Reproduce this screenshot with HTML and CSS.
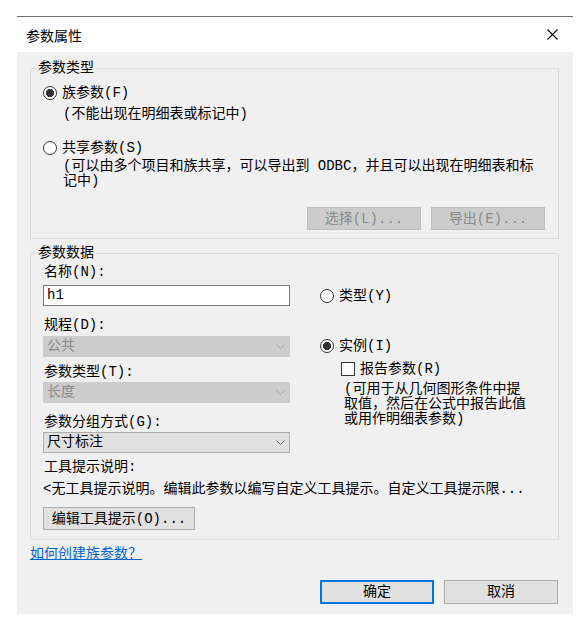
FILE: index.html
```html
<!DOCTYPE html>
<html lang="zh-CN">
<head>
    <meta charset="UTF-8">
    <meta name="viewport" content="width=device-width, initial-scale=1.0">
    <title>参数属性</title>
    <link rel="stylesheet" href="styles.css">
</head>
<body>

    <div class="dialog">
        <div class="titlebar">
            <span class="title">参数属性</span>
            <svg class="close" width="11" height="11" viewBox="0 0 11 11">
                <path d="M0.5 0.5 L10.5 10.5 M10.5 0.5 L0.5 10.5" stroke="#000" stroke-width="1.1" fill="none"/>
            </svg>
        </div>

        <div class="content">

            <fieldset class="group group-type">
                <legend>参数类型</legend>
                <div class="group-body">
                    <div class="opt"><span class="radio checked"></span>族参数(F)</div>
                    <p class="note note-family">(不能出现在明细表或标记中)</p>
                    <div class="opt opt-shared"><span class="radio"></span>共享参数(S)</div>
                    <p class="note note-shared">(可以由多个项目和族共享，可以导出到 ODBC，并且可以出现在明细表和标<br>记中)</p>
                    <div class="group-actions">
                        <button class="btn" disabled>选择(L)...</button>
                        <button class="btn" disabled>导出(E)...</button>
                    </div>
                </div>
            </fieldset>

            <fieldset class="group group-data">
                <legend>参数数据</legend>
                <div class="group-body">
                    <div class="data-cols">
                        <div class="col-left">
                            <p class="field-label">名称(N):</p>
                            <div class="textbox">h1</div>

                            <p class="field-label lbl-discipline">规程(D):</p>
                            <div class="select disabled">
                                <span>公共</span>
                                <svg width="9" height="5" viewBox="0 0 9 5"><path d="M0.5 0.5 L4.5 4.5 L8.5 0.5" stroke="currentColor" fill="none"/></svg>
                            </div>

                            <p class="field-label lbl-ptype">参数类型(T):</p>
                            <div class="select disabled">
                                <span>长度</span>
                                <svg width="9" height="5" viewBox="0 0 9 5"><path d="M0.5 0.5 L4.5 4.5 L8.5 0.5" stroke="currentColor" fill="none"/></svg>
                            </div>

                            <p class="field-label lbl-group">参数分组方式(G):</p>
                            <div class="select">
                                <span>尺寸标注</span>
                                <svg width="9" height="5" viewBox="0 0 9 5"><path d="M0.5 0.5 L4.5 4.5 L8.5 0.5" stroke="currentColor" fill="none"/></svg>
                            </div>
                        </div>

                        <div class="col-right">
                            <div class="opt opt-typ"><span class="radio"></span>类型(Y)</div>
                            <div class="opt opt-inst"><span class="radio checked"></span>实例(I)</div>
                            <div class="opt check-row"><span class="checkbox"></span>报告参数(R)</div>
                            <p class="desc">(可用于从几何图形条件中提<br>取值，然后在公式中报告此值<br>或用作明细表参数)</p>
                        </div>
                    </div>

                    <p class="field-label lbl-tip">工具提示说明:</p>
                    <p class="tip-text">&lt;无工具提示说明。编辑此参数以编写自定义工具提示。自定义工具提示限...</p>
                    <button class="btn btn-tip">编辑工具提示(O)...</button>
                </div>
            </fieldset>

            <a class="help-link" href="#">如何创建族参数？</a>

            <div class="dialog-actions">
                <button class="btn btn-big btn-ok">确定</button>
                <button class="btn btn-big">取消</button>
            </div>

        </div>
    </div>

</body>
</html>
```

FILE: styles.css
```css
body {
    margin: 0;
    padding: 0;
    background: #fff;
    color: #000;
    font-family: "Liberation Mono", "Noto Sans CJK SC", monospace;
    font-size: 14px;
}

p {
    margin: 0;
}

.dialog {
    margin: 16px 0 0 17px;
    width: 556px;
    border-top: 1px solid #6f6f64;
}

.titlebar {
    height: 35px;
    display: flex;
    align-items: center;
    justify-content: space-between;
    padding: 0 15px 0 9px;
}

.title {
    font-family: "Noto Sans CJK SC", sans-serif;
    line-height: 16px;
}

.content {
    box-sizing: border-box;
    height: 562px;
    background: #f0f0f0;
    padding: 8px 14px 0 13px;
}

/* group boxes */
.group {
    margin: 0;
    padding: 0;
    min-width: 0;
    border: 1px solid #dcdcdc;
}

.group legend {
    margin-left: 5px;
    padding: 0 2px;
    line-height: 16px;
}

.group-type .group-body {
    padding: 8px 13px 8px 12px;
}

.group-data {
    margin-top: 6px;
}

.group-data .group-body {
    padding: 3px 13px 9px 12px;
}

/* radios & checkbox */
.opt {
    display: flex;
    align-items: center;
    gap: 5px;
    height: 18px;
    line-height: 18px;
}

.radio,
.checkbox {
    flex: none;
    box-sizing: border-box;
    width: 14px;
    height: 14px;
    border: 1px solid #333;
    background: #fff;
}

.radio {
    border-radius: 50%;
}

.radio.checked {
    background: radial-gradient(circle, #333 0 3.8px, #fff 4.4px);
}

.note {
    margin: 5px 0 0 20px;
    line-height: 15px;
}

.opt-shared {
    margin-top: 17px;
}

.note-shared {
    margin-top: 2px;
}

.group-actions {
    display: flex;
    justify-content: flex-end;
    gap: 10px;
    margin-top: 18px;
}

/* buttons */
.btn {
    box-sizing: border-box;
    width: 114px;
    height: 23px;
    padding: 0;
    border: 1px solid #adadad;
    background: #e1e1e1;
    color: #000;
    font: inherit;
    line-height: 20px;
}

.btn:disabled {
    background: #cccccc;
    border-color: #bfbfbf;
    color: #8a8a8a;
}

/* parameter data */
.data-cols {
    display: flex;
    gap: 30px;
}

.col-left {
    width: 247px;
}

.field-label {
    line-height: 16px;
    margin-left: 1px;
}

.textbox {
    box-sizing: border-box;
    margin-top: 5px;
    height: 21px;
    padding-left: 3px;
    border: 1px solid #7a7a7a;
    background: #fff;
    line-height: 19px;
}

.lbl-discipline {
    margin-top: 11px;
}

.lbl-ptype {
    margin-top: 7px;
}

.lbl-group {
    margin-top: 11px;
}

.select {
    box-sizing: border-box;
    display: flex;
    align-items: center;
    justify-content: space-between;
    height: 21px;
    margin-top: 2px;
    padding: 0 4px 0 3px;
    border: 1px solid #adadad;
    background: #e1e1e1;
    color: #606060;
    line-height: 19px;
}

.select span {
    color: #000;
}

.select.disabled {
    background: #cccccc;
    border-color: #cccccc;
    color: #a8a8a8;
}

.select.disabled span {
    color: #8a8a8a;
}

.lbl-discipline + .select {
    margin-top: 3px;
}

.opt-typ {
    margin-top: 23px;
}

.opt-inst {
    margin-top: 32px;
}

.check-row {
    margin: 5px 0 0 21px;
}

.desc {
    margin: 4px 0 0 24px;
    line-height: 15px;
}

.lbl-tip {
    margin-top: 6px;
}

.tip-text {
    margin-top: 6px;
    line-height: 16px;
}

.btn-tip {
    width: 152px;
    margin-top: 10px;
}

/* footer */
.help-link {
    display: block;
    width: fit-content;
    margin-top: 6px;
    line-height: 16px;
    color: #0066cc;
    text-decoration: underline;
}

.dialog-actions {
    display: flex;
    justify-content: flex-end;
    gap: 10px;
    margin-top: 18px;
    padding-right: 1px;
}

.btn-big {
    height: 24px;
}

.btn-ok {
    border-color: #0078d7;
    box-shadow: inset 0 0 0 1px #0078d7;
}
```
